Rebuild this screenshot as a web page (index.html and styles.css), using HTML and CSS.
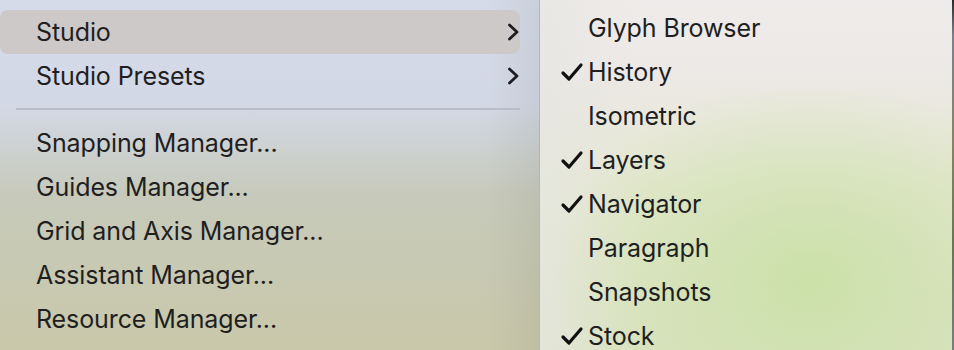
FILE: index.html
```html
<!DOCTYPE html>
<html lang="en">
<head>
    <meta charset="UTF-8">
    <meta name="viewport" content="width=device-width, initial-scale=1.0">
    <title>Studio Menu</title>
    <link rel="stylesheet" href="styles.css">
</head>
<body>
<div class="screen">
    <ul class="menu">
        <li class="item active">
            <span>Studio</span>
            <svg class="chevron" viewBox="0 0 12 18"><path d="M2.5 2 L10 9 L2.5 16"/></svg>
        </li>
        <li class="item">
            <span>Studio Presets</span>
            <svg class="chevron" viewBox="0 0 12 18"><path d="M2.5 2 L10 9 L2.5 16"/></svg>
        </li>
        <li class="separator"></li>
        <li class="item">Snapping Manager...</li>
        <li class="item">Guides Manager...</li>
        <li class="item">Grid and Axis Manager...</li>
        <li class="item">Assistant Manager...</li>
        <li class="item">Resource Manager...</li>
    </ul>

    <ul class="menu submenu">
        <li class="item">Glyph Browser</li>
        <li class="item checked"><svg class="check" viewBox="0 0 24 20"><path d="M3 11 L9 17 L21 3"/></svg>History</li>
        <li class="item">Isometric</li>
        <li class="item checked"><svg class="check" viewBox="0 0 24 20"><path d="M3 11 L9 17 L21 3"/></svg>Layers</li>
        <li class="item checked"><svg class="check" viewBox="0 0 24 20"><path d="M3 11 L9 17 L21 3"/></svg>Navigator</li>
        <li class="item">Paragraph</li>
        <li class="item">Snapshots</li>
        <li class="item checked"><svg class="check" viewBox="0 0 24 20"><path d="M3 11 L9 17 L21 3"/></svg>Stock</li>
    </ul>

    <div class="edge"></div>
</div>
</body>
</html>
```

FILE: styles.css
```css
:root {
    --text-color: #1f1f22;
    --font-family: Inter, 'Noto Sans', sans-serif;
}
body {
    margin: 0;
    font-family: var(--font-family);
    color: var(--text-color);
    overflow: hidden;
}
.screen {
    display: flex;
    width: 954px;
    height: 350px;
}
.menu {
    list-style: none;
    margin: 0;
    padding: 0;
}
.menu:first-child {
    width: 539px;
    padding-top: 10px;
    box-sizing: border-box;
    background:
        linear-gradient(to right, rgba(255,255,255,0) 90%, rgba(120,120,110,0.12) 100%),
        linear-gradient(to bottom, #d5dbe9 0%, #d3d8e6 30%, #c7cabb 55%, #c9c8aa 100%);
}
.item {
    display: flex;
    align-items: center;
    justify-content: space-between;
    height: 44px;
    padding: 0 20px 0 36px;
    font-size: 25px;
    letter-spacing: -0.1px;
}
.item.active {
    background-color: #cdc9c8;
    border-radius: 8px;
    margin-right: 19px;
    padding-right: 1px;
}
.chevron {
    width: 12px;
    height: 18px;
    fill: none;
    stroke: #1c1c24;
    stroke-width: 2.8;
    stroke-linecap: round;
    stroke-linejoin: round;
}
.separator {
    height: 2px;
    margin: 10px 19px 11px 16px;
    background-color: #b9bdca;
}
.submenu {
    flex: 1;
    padding-top: 6px;
    border-left: 1px solid #b4b6b0;
    background:
        radial-gradient(ellipse 260px 200px at 270px 280px, rgba(200,224,165,0.9), rgba(200,224,165,0) 100%),
        linear-gradient(to right, rgba(230,230,226,0.7) 0%, rgba(230,230,226,0) 25%),
        linear-gradient(to bottom, #efebea 0%, #ede9e6 20%, #e4e7cf 55%, #dde3c4 100%);
}
.submenu .item {
    justify-content: flex-start;
    padding-left: 48px;
}
.submenu .item.checked {
    padding-left: 20px;
}
.check {
    width: 24px;
    height: 20px;
    margin-right: 4px;
    fill: none;
    stroke: #111;
    stroke-width: 3.2;
    stroke-linecap: round;
    stroke-linejoin: round;
}
.edge {
    width: 2px;
    background: linear-gradient(to bottom, #2a2a2a 0%, #7a8090 10%, #8a8266 40%, #6a7458 70%, #7a7c80 100%);
}
```
